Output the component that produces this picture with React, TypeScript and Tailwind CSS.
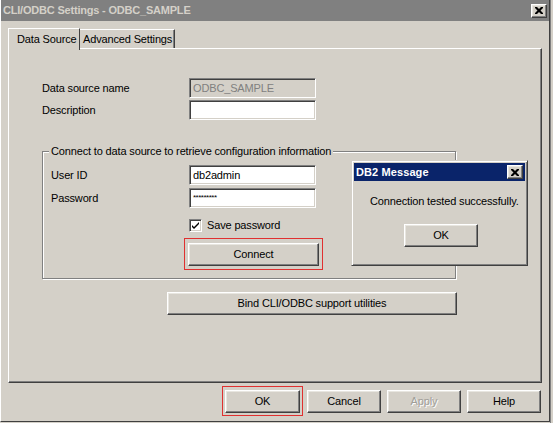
const font = { fontFamily: '"Liberation Sans", Arial, sans-serif' };

const raised =
  "border border-t-white border-l-white border-r-[#404040] border-b-[#404040] shadow-[inset_-1px_-1px_0_#808080,inset_1px_1px_0_#e8e6e0]";
const sunken =
  "border border-t-[#808080] border-l-[#808080] border-r-white border-b-white shadow-[inset_1px_1px_0_#404040,inset_-1px_-1px_0_#d4d0c8]";

const Button = ({ label, className = "", disabled = false }: { label: string; className?: string; disabled?: boolean }) => (
  <div
    className={`${raised} bg-[#d4d0c8] flex items-center justify-center whitespace-nowrap ${
      disabled ? "text-[#a09e98] [text-shadow:1px_1px_0_#fff]" : "text-black"
    } ${className}`}
  >
    {label}
  </div>
);

const Input = ({ value = "", disabled = false, small = false }: { value?: string; disabled?: boolean; small?: boolean }) => (
  <div
    className={`${sunken} w-[127px] h-[20px] flex items-center px-[3px] ${
      disabled ? "bg-[#d4d0c8] text-[#808080]" : "bg-white text-black"
    } ${small ? "text-[8px] tracking-[-0.5px]" : ""}`}
  >
    {value}
  </div>
);

const CloseBox = () => (
  <div className={`${raised} bg-[#d4d0c8] w-[16px] h-[14px] flex items-center justify-center`}>
    <svg width="8" height="7" viewBox="0 0 8 7">
      <path d="M0 0h2l2 2 2-2h2v1l-2.5 2.5L8 6v1H6L4 5 2 7H0V6l2.5-2.5L0 1z" fill="#000" />
    </svg>
  </div>
);

export default function App() {
  return (
    <div
      className="w-[553px] h-[423px] bg-[#d4d0c8] flex overflow-hidden relative text-[11px] tracking-[-0.15px] whitespace-nowrap"
      style={font}
    >
      {/* main window */}
      <div className="w-[550px] h-[422px] flex flex-col border-l border-l-white border-r border-r-[#404040] border-b border-b-[#404040]">
        {/* title bar */}
        <div className="h-[21px] bg-[#808080] flex items-center justify-between pl-[2px] pr-[2px]">
          <span className="text-[#d4d0c8] font-bold text-[11px] tracking-[-0.2px]">CLI/ODBC Settings - ODBC_SAMPLE</span>
          <CloseBox />
        </div>

        {/* tabs */}
        <div className="flex items-end pl-[7px] pt-[5px] h-[27px]">
          <div className="h-[22px] w-[72px] border-t border-l border-t-white border-l-white border-r border-r-[#404040] bg-[#d4d0c8] flex items-center pl-[8px] relative top-[1px] z-10 mb-[-1px]">
            Data Source
          </div>
          <div className="h-[19px] w-[95px] border-t border-t-white border-r border-r-[#404040] shadow-[inset_-1px_0_0_#808080] flex items-center pl-[3px]">
            Advanced Settings
          </div>
        </div>

        {/* panel */}
        <div className="ml-[7px] w-[534px] h-[335px] border border-t-white border-l-white border-r-[#404040] border-b-[#404040] shadow-[inset_-1px_-1px_0_#808080] flex flex-col pl-[33px] pt-[29px]">
          <div className="flex items-center h-[20px]">
            <span className="w-[147px]">Data source name</span>
            <Input value="ODBC_SAMPLE" disabled />
          </div>
          <div className="flex items-center h-[20px] mt-[2px]">
            <span className="w-[147px]">Description</span>
            <Input />
          </div>

          {/* group box */}
          <div className="relative mt-[31px] w-[414px] h-[128px] border border-[#808080] shadow-[inset_1px_1px_0_#fff,1px_1px_0_#fff] pl-[8px] pt-[13px] flex flex-col">
            <span className="absolute left-[6px] top-[-8px] bg-[#d4d0c8] px-[2px] leading-[14px]">
              Connect to data source to retrieve configuration information
            </span>
            <div className="flex items-center h-[20px]">
              <span className="w-[138px]">User ID</span>
              <Input value="db2admin" />
            </div>
            <div className="flex items-center h-[20px] mt-[3px]">
              <span className="w-[138px]">Password</span>
              <Input value="*********" small />
            </div>
            <div className="flex items-center ml-[138px] mt-[11px] h-[13px]">
              <div className={`${sunken} w-[13px] h-[13px] bg-white flex items-center justify-center`}>
                <svg width="9" height="9" viewBox="0 0 9 9">
                  <path d="M1 4l2 2 5-5v2L3 8 1 6z" fill="#000" />
                </svg>
              </div>
              <span className="ml-[5px]">Save password</span>
            </div>
            <div className="ml-[133px] mt-[6px] w-[139px] h-[32px] border border-[#e03030] flex items-center justify-center">
              <Button label="Connect" className="w-[131px] h-[23px]" />
            </div>
          </div>

          <div className="ml-[125px] mt-[13px]">
            <Button label="Bind CLI/ODBC support utilities" className="w-[290px] h-[23px]" />
          </div>
        </div>

        {/* bottom buttons */}
        <div className="flex items-center justify-end pr-[8px] mt-[3px]">
          <div className="w-[81px] h-[30px] border border-[#e03030] flex items-center justify-center">
            <Button label="OK" className="w-[75px] h-[23px]" />
          </div>
          <Button label="Cancel" className="w-[74px] h-[23px] ml-[4px]" />
          <Button label="Apply" className="w-[74px] h-[23px] ml-[6px]" disabled />
          <Button label="Help" className="w-[74px] h-[23px] ml-[6px]" />
        </div>
      </div>

      {/* background window edge */}
      <div className="w-[3px] h-full bg-[#d4d0c8] shadow-[inset_1px_0_0_#808080]" />

      {/* DB2 Message popup */}
      <div className="absolute left-[351px] top-[160px] w-[177px] h-[106px] bg-[#d4d0c8] border border-t-[#d4d0c8] border-l-[#d4d0c8] border-r-[#404040] border-b-[#404040] shadow-[inset_1px_1px_0_#fff,inset_-1px_-1px_0_#808080] p-[2px] flex flex-col">
        <div className="h-[18px] bg-[#0a246a] flex items-center justify-between pl-[2px] pr-[2px]">
          <span className="text-white font-bold text-[11px] tracking-[0.1px]">DB2 Message</span>
          <CloseBox />
        </div>
        <div className="mt-[12px] ml-[16px]">Connection tested successfully.</div>
        <div className="mt-[14px] ml-[50px]">
          <Button label="OK" className="w-[74px] h-[23px]" />
        </div>
      </div>
    </div>
  );
}
